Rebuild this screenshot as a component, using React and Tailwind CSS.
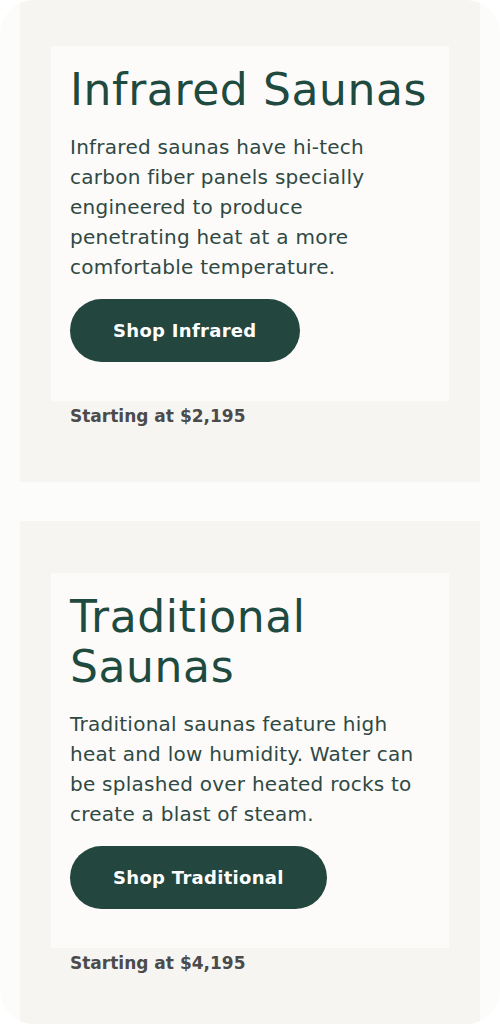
export default function App() {
  const cards = [
    {
      title: ["Infrared Saunas"],
      body: [
        "Infrared saunas have hi-tech",
        "carbon fiber panels specially",
        "engineered to produce",
        "penetrating heat at a more",
        "comfortable temperature.",
      ],
      cta: "Shop Infrared",
      price: "Starting at $2,195",
    },
    {
      title: ["Traditional", "Saunas"],
      body: [
        "Traditional saunas feature high",
        "heat and low humidity. Water can",
        "be splashed over heated rocks to",
        "create a blast of steam.",
      ],
      cta: "Shop Traditional",
      price: "Starting at $4,195",
    },
  ]

  return (
    <div className="bg-white w-[500px] h-[1024px]" style={{ fontFamily: '"DejaVu Sans", "Noto Sans", sans-serif' }}>
      <div className="h-full rounded-[34px] overflow-hidden bg-[#fcfcfa] px-5 flex flex-col gap-[39px]">
        {cards.map((card, i) => (
          <section key={i} className={`bg-[#f7f5f2] px-[31px] pb-[51px] ${i === 0 ? "pt-[46px]" : "pt-[52px]"}`}>
            <div className="bg-[#fcfbf9] px-[19px] pt-[19px] pb-[39px]">
              <h2 className="text-[44px] leading-[50px] tracking-[0.6px] text-[#1f4a40] font-normal">
                {card.title.map((line, j) => (
                  <span key={j} className="block">{line}</span>
                ))}
              </h2>
              <p className="mt-[17px] text-[20px] leading-[30px] tracking-[0.25px] text-[#2f4944]">
                {card.body.map((line, j) => (
                  <span key={j} className="block whitespace-nowrap">{line}</span>
                ))}
              </p>
              <button className="mt-[17px] h-[63px] px-[43px] rounded-full bg-[#23463e] text-white text-[18px] tracking-[0.3px] font-bold">
                {card.cta}
              </button>
            </div>
            <p className="px-[19px] text-[17px] leading-[30px] font-bold text-[#4b4b4b]">{card.price}</p>
          </section>
        ))}
      </div>
    </div>
  )
}
